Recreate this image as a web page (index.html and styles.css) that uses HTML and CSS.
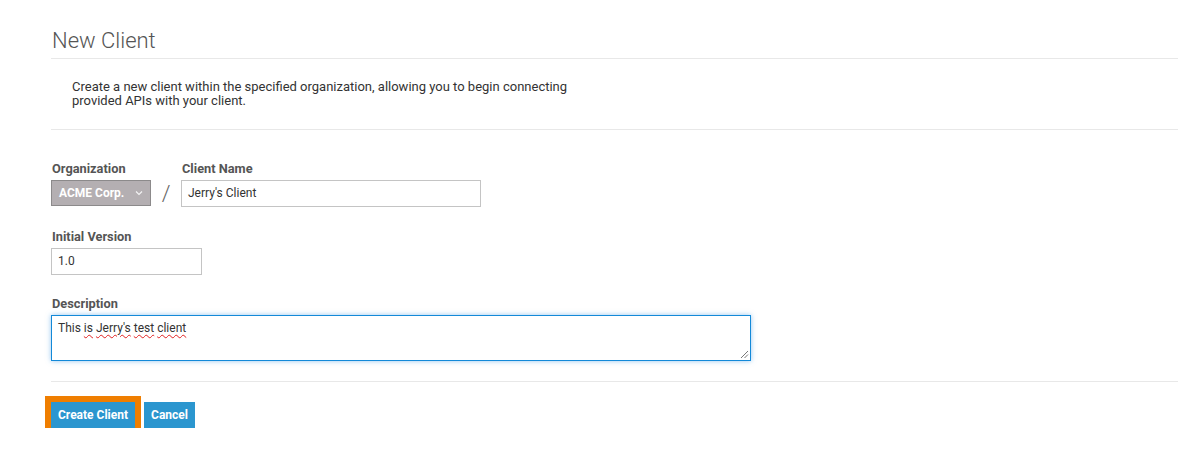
FILE: index.html
```html
<!DOCTYPE html>
<html>
<head>
<meta charset="utf-8">
<link rel="stylesheet" href="styles.css">
</head>
<body>
<div class="page">
  <h1 class="title">New Client</h1>
  <hr class="rule">
  <p class="intro">Create a new client within the specified organization, allowing you to begin connecting<br>provided APIs with your client.</p>
  <hr class="rule">
  <form class="form">
    <div class="row">
      <div class="group">
        <label class="label">Organization</label>
        <div class="select">
          <span>ACME Corp.</span>
          <svg class="chev" width="8" height="6" viewBox="0 0 8 6"><path d="M1 1.5 L4 4.5 L7 1.5" fill="none" stroke="#f4f4f4" stroke-width="1.1"/></svg>
        </div>
      </div>
      <div class="slash">/</div>
      <div class="group">
        <label class="label">Client Name</label>
        <div class="input input-name">Jerry's Client</div>
      </div>
    </div>
    <div class="group">
      <label class="label">Initial Version</label>
      <div class="input input-version">1.0</div>
    </div>
    <div class="group group-desc">
      <label class="label">Description</label>
      <div class="textarea">This <span class="sp">is</span> <span class="sp">Jerry's</span> <span class="sp">test</span> <span class="sp">client</span>
        <svg class="grip" width="9" height="9" viewBox="0 0 9 9"><path d="M8 1 L1 8 M8 4.5 L4.5 8" stroke="#777" stroke-width="1"/></svg>
      </div>
    </div>
  </form>
  <hr class="rule">
  <div class="actions">
    <button class="btn btn-focus" type="button">Create Client</button>
    <button class="btn" type="button">Cancel</button>
  </div>
</div>
</body>
</html>
```
FILE: styles.css
```css
html, body {
  margin: 0;
  padding: 0;
  background: #fff;
}
body {
  font-family: Roboto, "Liberation Sans", Arial, sans-serif;
  color: #333;
}
.page {
  width: 1127px;
  padding: 28px 0 0 51px;
}
.title {
  margin: 0;
  font-size: 22px;
  font-weight: 300;
  line-height: 26px;
  color: #555;
  padding-left: 1px;
  height: 25px;
}
.rule {
  border: 0;
  border-top: 1px solid #e8e8e8;
  margin: 5px 0 0 0;
  height: 0;
}
.intro {
  margin: 21px 0 21px 21px;
  font-size: 13px;
  line-height: 14px;
  color: #333;
}
.rule + .form { margin-top: 31px; }
.form {
  display: flex;
  flex-direction: column;
  gap: 22px;
}
.group-desc { margin-top: -1px; }
.row {
  display: flex;
  align-items: flex-end;
}
.group {
  display: flex;
  flex-direction: column;
}
.label {
  font-size: 12.8px;
  font-weight: 700;
  line-height: 15px;
  color: #555;
  margin-bottom: 4px;
  padding-left: 1px;
}
.select {
  box-sizing: border-box;
  width: 100px;
  height: 26px;
  background: #b4afb2;
  border: 1px solid #8c8a8b;
  color: #fff;
  font-size: 12px;
  font-weight: 700;
  display: flex;
  align-items: center;
  padding: 0 0 0 7px;
  gap: 11px;
  margin-bottom: 1px;
}
.slash {
  width: 30px;
  text-align: center;
  font-size: 22px;
  font-weight: 300;
  color: #666;
  line-height: 27px;
  height: 27px;
  box-sizing: border-box;
}
.input {
  box-sizing: border-box;
  height: 27px;
  border: 1px solid #c4c4c4;
  font-size: 12px;
  line-height: 25px;
  padding: 0 6px;
  color: #333;
}
.input-name { width: 300px; }
.input-version { width: 151px; }
.textarea {
  position: relative;
  box-sizing: border-box;
  width: 700px;
  height: 46px;
  border: 1px solid #1389d8;
  box-shadow: 0 0 5px rgba(60, 150, 225, 0.55);
  font-size: 12px;
  line-height: 15px;
  padding: 5px 6px;
  color: #333;
}
.sp {
  text-decoration: underline wavy #e02020;
  text-decoration-thickness: 1px;
  text-underline-offset: 2px;
}
.grip {
  position: absolute;
  right: 1px;
  bottom: 1px;
}
.form + .rule { margin-top: 20px; }
.actions {
  display: flex;
  gap: 9px;
  margin-top: 20px;
}
.btn {
  height: 26px;
  border: 0;
  background: #2b96cf;
  color: #fff;
  font-family: Roboto, "Liberation Sans", Arial, sans-serif;
  font-size: 12px;
  font-weight: 700;
  padding: 0 7px;
  margin: 0;
  white-space: nowrap;
}
.btn-focus {
  outline: 6px solid #ef7e00;
  outline-offset: 0;
}
```
